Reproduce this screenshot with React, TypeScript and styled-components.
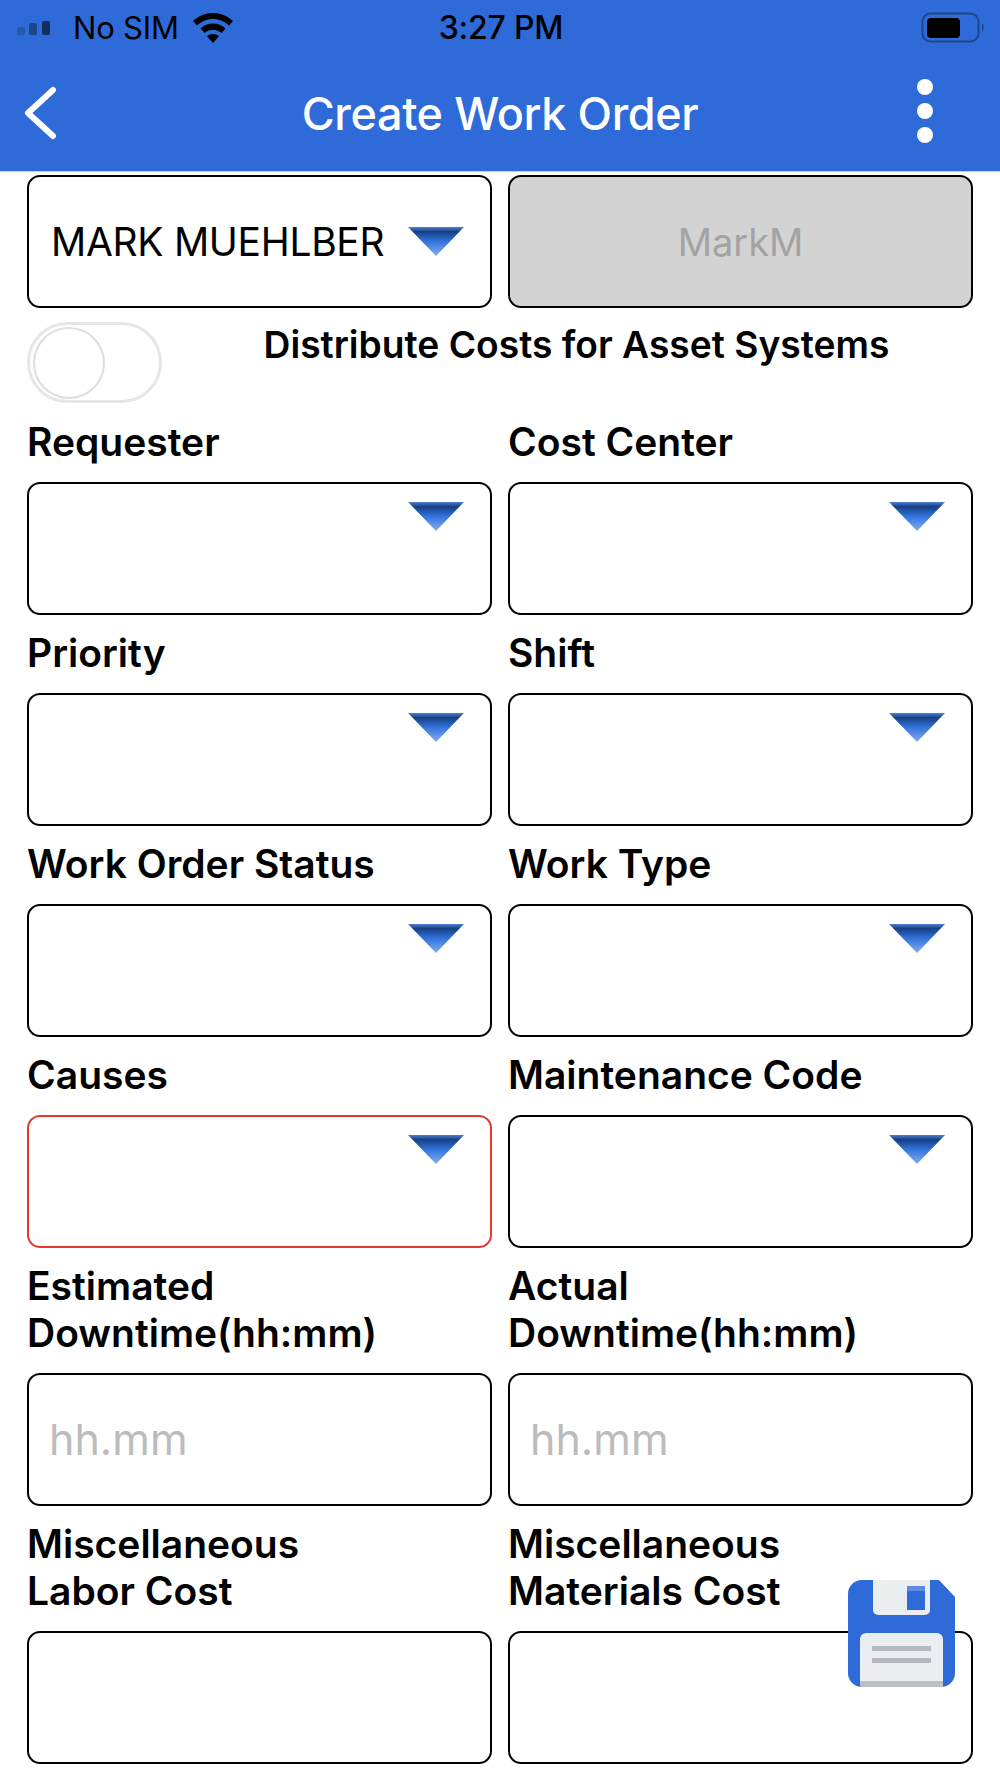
import React from 'react'
import styled, { createGlobalStyle } from 'styled-components'

const GlobalStyle = createGlobalStyle`
  html, body {
    margin: 0;
    padding: 0;
    background: #fff;
  }
  body {
    font-family: Inter, "Liberation Sans", sans-serif;
    color: #000;
  }
`

const Page = styled.div`
  position: relative;
  width: 1000px;
  height: 1778px;
  overflow: hidden;
  background: #fff;
`

const Header = styled.header`
  height: 171px;
  background: #2e6bd9;
  border-bottom: 1px solid #c9d3e4;
  box-sizing: content-box;
`

const StatusBar = styled.div`
  height: 55px;
  display: grid;
  grid-template-columns: 1fr auto 1fr;
  align-items: center;
  padding: 0 15px 0 17px;
  font-size: 31px;
  letter-spacing: -0.2px;
`

const StatusLeft = styled.div`
  display: flex;
  align-items: center;
`

const Carrier = styled.span`
  margin-left: 23px;
  margin-right: 14px;
`

const Clock = styled.span`
  font-size: 32px;
  font-weight: 500;
`

const StatusRight = styled.div`
  display: flex;
  justify-content: flex-end;
`

const NavBar = styled.div`
  height: 116px;
  display: grid;
  grid-template-columns: 1fr auto 1fr;
  align-items: center;
  padding: 0 22px;
`

const Title = styled.h1`
  margin: 0;
  font-size: 45px;
  font-weight: 500;
  color: #fff;
  letter-spacing: -0.4px;
`

const Dots = styled.div`
  justify-self: end;
  display: flex;
  flex-direction: column;
  gap: 8px;
  margin: -4px 45px 0 0;
  span {
    width: 16px;
    height: 16px;
    border-radius: 50%;
    background: #fff;
  }
`

const Form = styled.main`
  padding: 3px 27px 0;
`

const Grid = styled.div`
  display: grid;
  grid-template-columns: 465px 465px;
  column-gap: 16px;
`

const Box = styled.div<{ $error?: boolean; $disabled?: boolean }>`
  box-sizing: border-box;
  height: 133px;
  display: flex;
  justify-content: flex-end;
  padding: 18px 26px 0 0;
  border: 2px solid ${p => (p.$error ? '#e5392f' : '#000')};
  border-radius: 13px;
  background: ${p => (p.$disabled ? '#d3d3d3' : '#fff')};
`

const FilledBox = styled(Box)`
  align-items: center;
  justify-content: space-between;
  padding: 0 26px 0 22px;
  font-size: 39px;
  letter-spacing: -0.3px;
`

const DisabledBox = styled(Box)`
  align-items: center;
  justify-content: center;
  padding: 0;
  font-size: 38px;
  color: #a3a3a3;
`

const TextInput = styled.input`
  display: block;
  box-sizing: border-box;
  width: 100%;
  height: 133px;
  padding: 0 20px;
  border: 2px solid #000;
  border-radius: 13px;
  background: #fff;
  font-family: inherit;
  font-size: 43px;
  outline: none;
  &::placeholder {
    color: #bcbcbc;
    opacity: 1;
  }
`

const ToggleRow = styled.div`
  display: flex;
  align-items: flex-start;
  padding: 14px 0 15px;
`

const Toggle = styled.div`
  position: relative;
  box-sizing: border-box;
  width: 135px;
  height: 81px;
  border: 3px solid #e6e6e6;
  border-radius: 41px;
  flex: none;
  &::after {
    content: '';
    position: absolute;
    left: 3px;
    top: 2px;
    box-sizing: border-box;
    width: 72px;
    height: 72px;
    border: 2px solid #dedede;
    border-radius: 50%;
    background: #fff;
  }
`

const ToggleLabel = styled.div`
  flex: 1;
  padding-left: 18px;
  text-align: center;
  font-size: 37.200px;
  font-weight: 600;
  line-height: 46px;
`

const Label = styled.label`
  display: block;
  font-size: 39px;
  font-weight: 600;
  line-height: 47px;
  padding: 14.500px 0 16.500px;
`

const FirstRowLabel = styled(Label)`
  padding-top: 0;
`

const FloatingSave = styled.button`
  position: absolute;
  left: 848px;
  top: 1580px;
  width: 107px;
  height: 107px;
  padding: 0;
  border: 0;
  background: none;
  svg {
    display: block;
  }
`

const Signal = () => (
  <svg width="33" height="16" viewBox="0 0 33 16">
    <rect x="0" y="7" width="8" height="8" rx="2" fill="#265aa9" />
    <rect x="12" y="3" width="8" height="12" rx="2" fill="#1c4686" />
    <rect x="25" y="1" width="8" height="14" rx="2" fill="#12305f" />
  </svg>
)

const Wifi = () => (
  <svg width="40" height="30" viewBox="0 0 40 30">
    <path d="M20 0C12 0 5.500 3 0 8l4 4.500C8.500 8.500 14 6 20 6s11.500 2.500 16 6.500L40 8C34.500 3 28 0 20 0z" fill="#000" />
    <path d="M20 10.500c-5 0-9 1.800-12.500 5l4 4.500c2.300-2 5-3.300 8.500-3.300s6.200 1.300 8.500 3.300l4-4.500c-3.500-3.200-7.500-5-12.500-5z" fill="#000" />
    <path d="M20 21c-2.500 0-4.500.8-6 2.200L20 30l6-6.800C24.500 21.800 22.500 21 20 21z" fill="#000" />
  </svg>
)

const Battery = () => (
  <svg width="64" height="32" viewBox="0 0 64 32">
    <rect x="1.500" y="1.500" width="56" height="28" rx="8" fill="none" stroke="#1c4686" strokeWidth="2" />
    <rect x="6" y="6" width="33" height="20" rx="4" fill="#000" />
    <path d="M61 11c2 1 2 8 0 9z" fill="#1c4686" />
  </svg>
)

const BackChevron = () => (
  <svg width="36" height="54" viewBox="0 0 36 54">
    <path d="M31 4L6 27l25 23" fill="none" stroke="#fff" strokeWidth="6" strokeLinecap="round" strokeLinejoin="round" />
  </svg>
)

const Caret = ({ id }: { id: string }) => (
  <svg width="56" height="29" viewBox="0 0 56 29">
    <defs>
      <linearGradient id={id} x1="0" y1="0" x2="0" y2="1">
        <stop offset="0" stopColor="#4f80d4" />
        <stop offset="0.16" stopColor="#173f84" />
        <stop offset="0.5" stopColor="#3274de" />
        <stop offset="1" stopColor="#86aeec" />
      </linearGradient>
    </defs>
    <path d="M0 0h56L28 29z" fill={`url(#${id})`} />
  </svg>
)

const SaveIcon = () => (
  <svg width="107" height="107" viewBox="0 0 107 107">
    <path d="M14 0h77l16 17v76a14 14 0 0 1-14 14H14A14 14 0 0 1 0 93V14A14 14 0 0 1 14 0z" fill="#2e6bd9" />
    <path d="M25 0h57v30a5 5 0 0 1-5 5H30a5 5 0 0 1-5-5z" fill="#ebeef0" />
    <rect x="59" y="6" width="18" height="24" fill="#2e6bd9" />
    <rect x="59" y="6" width="18" height="5" fill="#5a8ce6" />
    <path d="M12 107V59a6 6 0 0 1 6-6h71a6 6 0 0 1 6 6v48z" fill="#ebeef0" />
    <rect x="12" y="101" width="83" height="6" fill="#bcc0c4" />
    <rect x="24" y="66" width="59" height="5" fill="#b5b9bd" />
    <rect x="24" y="78" width="59" height="5" fill="#b5b9bd" />
  </svg>
)

const selects = [
  ['Requester', 'Cost Center'],
  ['Priority', 'Shift'],
  ['Work Order Status', 'Work Type'],
  ['Causes', 'Maintenance Code'],
]

const inputs = [
  { left: ['Estimated', 'Downtime(hh:mm)'], right: ['Actual', 'Downtime(hh:mm)'], hint: 'hh.mm' },
  { left: ['Miscellaneous', 'Labor Cost'], right: ['Miscellaneous', 'Materials Cost'], hint: '' },
]

export default function App() {
  return (
    <Page>
      <GlobalStyle />
      <Header>
        <StatusBar>
          <StatusLeft>
            <Signal />
            <Carrier>No SIM</Carrier>
            <Wifi />
          </StatusLeft>
          <Clock>3:27 PM</Clock>
          <StatusRight>
            <Battery />
          </StatusRight>
        </StatusBar>
        <NavBar>
          <BackChevron />
          <Title>Create Work Order</Title>
          <Dots>
            <span />
            <span />
            <span />
          </Dots>
        </NavBar>
      </Header>
      <Form>
        <Grid>
          <FilledBox>
            MARK MUEHLBER
            <Caret id="caret-user" />
          </FilledBox>
          <DisabledBox $disabled>MarkM</DisabledBox>
        </Grid>
        <ToggleRow>
          <Toggle />
          <ToggleLabel>Distribute Costs for Asset Systems</ToggleLabel>
        </ToggleRow>
        <Grid>
          {selects.flat().map((name, i) => {
            const FieldLabel = i < 2 ? FirstRowLabel : Label
            return (
              <div key={name}>
                <FieldLabel>{name}</FieldLabel>
                <Box $error={name === 'Causes'}>
                  <Caret id={`caret-${i}`} />
                </Box>
              </div>
            )
          })}
          {inputs.map(row =>
            [row.left, row.right].map(lines => (
              <div key={lines.join(' ')}>
                <Label>
                  {lines[0]}
                  <br />
                  {lines[1]}
                </Label>
                <TextInput placeholder={row.hint} />
              </div>
            )),
          )}
        </Grid>
      </Form>
      <FloatingSave aria-label="Save">
        <SaveIcon />
      </FloatingSave>
    </Page>
  )
}
